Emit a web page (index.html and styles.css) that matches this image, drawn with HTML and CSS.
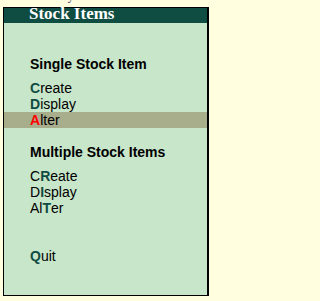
FILE: index.html
```html
<!DOCTYPE html>
<html>
<head>
<meta charset="utf-8">
<link rel="stylesheet" href="styles.css">
</head>
<body>
<div class="caption"><span class="caption-text">Inventory Info.</span></div>
<div class="panel">
  <div class="panel-title">Stock Items</div>
  <div class="panel-body">
    <div class="group-head">Single Stock Item</div>
    <div class="item"><b class="key">C</b>reate</div>
    <div class="item"><b class="key">D</b>isplay</div>
    <div class="item item-active"><b class="key key-active">A</b>lter</div>
    <div class="group-head group-gap">Multiple Stock Items</div>
    <div class="item">C<b class="key">R</b>eate</div>
    <div class="item">D<b class="key">I</b>splay</div>
    <div class="item">Al<b class="key">T</b>er</div>
    <div class="item quit"><b class="key">Q</b>uit</div>
  </div>
</div>
</body>
</html>
```

FILE: styles.css
```css
html, body {
  margin: 0;
  padding: 0;
  background: #FFFFE0;
}

body {
  width: 213px;
  height: 301px;
  overflow: hidden;
}

.caption {
  display: flow-root;
  height: 7px;
  overflow: hidden;
  padding-left: 27px;
}

.caption-text {
  display: block;
  margin-top: -10px;
  font-family: "Liberation Serif", serif;
  font-size: 12px;
  line-height: 12px;
  color: #33225E;
  white-space: nowrap;
}

.panel {
  margin-left: 3px;
  width: 206px;
  height: 289px;
  box-sizing: border-box;
  border: 1px solid #000;
  border-right-width: 2px;
  background: #C8E6CA;
  display: flex;
  flex-direction: column;
}

.panel-title {
  height: 15px;
  flex: none;
  background: #0F4D42;
  color: #FFFFFF;
  font-family: "Liberation Serif", serif;
  font-weight: bold;
  font-size: 17px;
  line-height: 12px;
  padding-left: 25px;
  box-sizing: border-box;
  white-space: nowrap;
}

.panel-body {
  padding-top: 33px;
  font-family: "Liberation Sans", Arial, sans-serif;
  font-size: 14px;
  line-height: 16px;
  color: #000;
}

.group-head {
  font-weight: bold;
  padding-left: 26px;
  height: 16px;
  margin-bottom: 8px;
  white-space: nowrap;
}

.group-gap {
  margin-top: 16px;
}

.item {
  padding-left: 26px;
  height: 16px;
  white-space: nowrap;
}

.item-active {
  background: #A8AD8C;
}

.key {
  font-weight: bold;
  color: #0F4D42;
}

.key-active {
  color: #FF0000;
}

.quit {
  margin-top: 32px;
}
```
